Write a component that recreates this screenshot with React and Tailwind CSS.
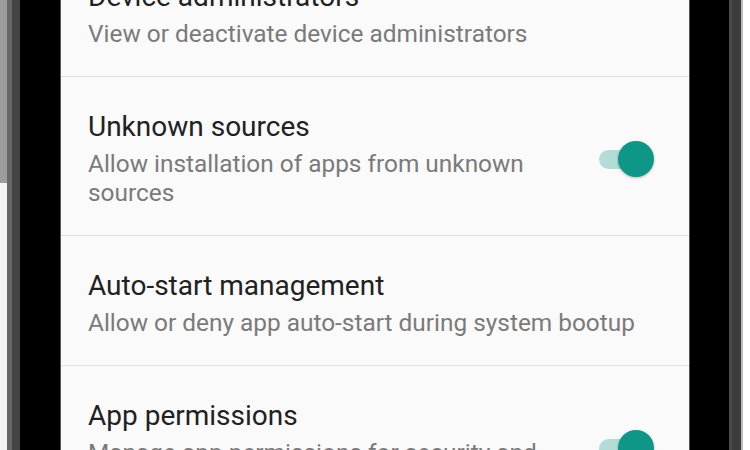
import React from "react";

function Toggle() {
  return (
    <div className="relative w-[58px] h-[36px] shrink-0">
      <div className="absolute left-[2px] top-[9px] w-[50px] h-[19px] rounded-full bg-[#b4dcd7]" />
      <div className="absolute left-[21px] top-0 w-[36px] h-[36px] rounded-full bg-[#0e9686] shadow-[0_1px_3px_rgba(0,0,0,0.25)]" />
    </div>
  );
}

function Row({ title, sub, toggle, last }) {
  return (
    <div className={"flex items-center pl-[27px] pr-[34px] pt-[34px] pb-[28px] " + (last ? "" : "border-b border-[#e2e2e2]")}>
      <div className="flex-1 min-w-0 pr-[10px]">
        <div className="text-[28px] leading-[32px] text-[#212121]">{title}</div>
        <div className="mt-[6px] text-[24.4px] leading-[29px] text-[#7a7a7a]">{sub}</div>
      </div>
      {toggle && <Toggle />}
    </div>
  );
}

export default function App() {
  return (
    <div className="w-[750px] h-[450px] overflow-hidden flex bg-white" style={{ fontFamily: "Roboto, 'Noto Sans', sans-serif" }}>
      {/* left bezel */}
      <div className="w-[7px] h-full flex flex-col">
        <div className="h-[183px] bg-[#9c9c9c]" />
        <div className="flex-1 bg-[#f4f4f4]" />
      </div>
      <div className="w-[5px] h-full bg-[#676767]" />
      <div className="w-[8px] h-full bg-[#444]" />
      <div className="w-[40px] h-full bg-black" />
      <div className="w-[1px] h-full bg-[#5a5a5a]" />
      {/* screen */}
      <div className="w-[628px] h-full bg-[#fafafa] overflow-hidden">
        <div className="mt-[-53px]">
          <Row title="Device administrators" sub="View or deactivate device administrators" />
          <Row title="Unknown sources" sub="Allow installation of apps from unknown sources" toggle />
          <Row title="Auto-start management" sub="Allow or deny app auto-start during system bootup" />
          <Row title="App permissions" sub="Manage app permissions for security and privacy" toggle last />
        </div>
      </div>
      {/* right bezel */}
      <div className="w-[1px] h-full bg-[#555]" />
      <div className="w-[39px] h-full bg-black" />
      <div className="w-[3px] h-full bg-[#4a4a4a]" />
      <div className="w-[9px] h-full bg-[#3c3c3c]" />
      <div className="w-[2px] h-full bg-[#bbbbbb]" />
      <div className="flex-1 h-full bg-white" />
    </div>
  );
}
